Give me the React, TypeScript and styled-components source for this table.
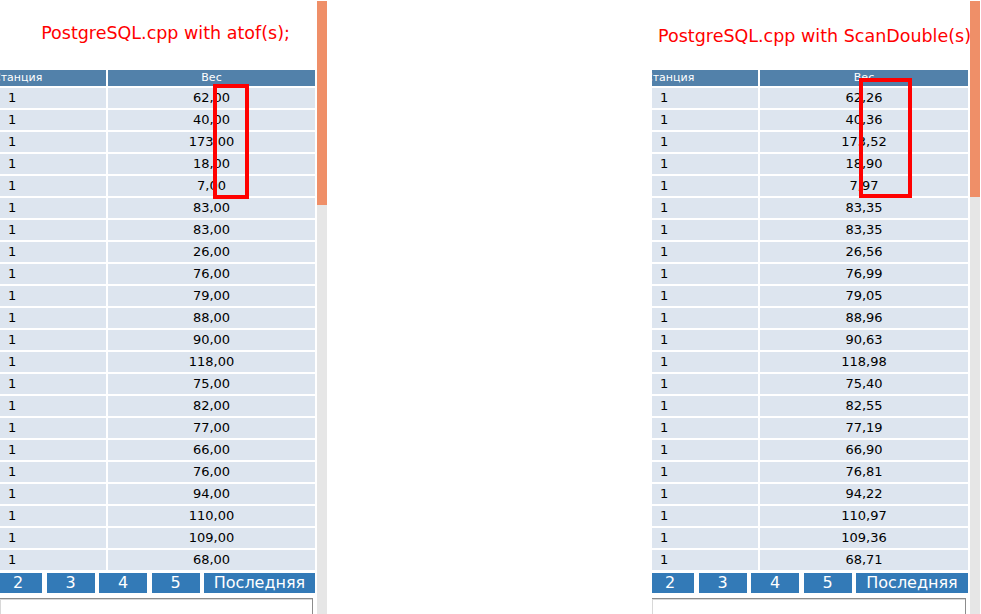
import React from "react";
import styled, { createGlobalStyle } from "styled-components";

const Global = createGlobalStyle`
  html, body { margin: 0; padding: 0; background: #fff; }
  body { font-family: "DejaVu Sans", Verdana, sans-serif; overflow: hidden; }
`;

const Page = styled.div`
  width: 981px;
  height: 614px;
  display: flex;
  justify-content: space-between;
  overflow: hidden;
`;

const Panel = styled.div<{ $w: number }>`
  position: relative;
  width: ${(p) => p.$w}px;
  height: 614px;
  display: grid;
  grid-template-columns: ${(p) => p.$w - 13}px 10px;
  column-gap: 2px;
  align-items: start;
`;

const Content = styled.div`
  display: flex;
  flex-direction: column;
  overflow: visible;
  min-width: 0;
`;

const Title = styled.div<{ $top: number }>`
  width: 331px;
  height: 70px;
  box-sizing: border-box;
  padding-top: ${(p) => p.$top}px;
  text-align: center;
  white-space: nowrap;
  color: #ff0000;
  font-size: 17.5px;
  line-height: 20px;
`;

const TableClip = styled.div`
  overflow: hidden;
`;

const Grid = styled.div`
  display: grid;
  grid-template-columns: 116px 1fr;
  column-gap: 2px;
  row-gap: 2px;
  margin-left: -10px;
`;

const Head = styled.div<{ $align: "left" | "center" }>`
  height: 16px;
  background: #5281aa;
  color: #fff;
  font-size: 11px;
  line-height: 16px;
  text-align: ${(p) => p.$align};
  text-indent: ${(p) => (p.$align === "left" ? "3px" : "0")};
  white-space: nowrap;
  overflow: hidden;
`;

const Cell = styled.div<{ $align: "left" | "center" }>`
  height: 20px;
  background: #dde5ef;
  color: #000;
  font-size: 13px;
  line-height: 20px;
  text-align: ${(p) => p.$align};
  padding-left: ${(p) => (p.$align === "left" ? "18px" : "0")};
  white-space: nowrap;
`;

const Pager = styled.div`
  display: flex;
  gap: 4.5px;
  margin: 3px 0 0 -6px;
  height: 20px;
`;

const PageBtn = styled.div<{ $wide?: boolean }>`
  flex: ${(p) => (p.$wide ? "1" : "0 0 48px")};
  background: #337ab7;
  color: #fff;
  font-size: 16px;
  line-height: 20px;
  text-align: center;
  white-space: nowrap;
`;

const Box = styled.div`
  margin-top: 5px;
  margin-right: 2px;
  height: 40px;
  border: 1px solid #8c8c8c;
  box-shadow: inset 1px 1px 0 #d8d8d8;
  border-left: none;
`;

const Scroll = styled.div<{ $thumb: number }>`
  position: relative;
  z-index: 2;
  grid-row: 1 / span 1;
  grid-column: 2;
  height: 614px;
  background: linear-gradient(
    to bottom,
    #fff 0px,
    #fff 1px,
    #ef8f68 1px,
    #ef8f68 ${(p) => p.$thumb}px,
    #e6e6e6 ${(p) => p.$thumb}px
  );
`;

const Mark = styled.div<{ $x: number; $y: number; $w: number; $h: number }>`
  position: absolute;
  left: ${(p) => p.$x}px;
  top: ${(p) => p.$y}px;
  width: ${(p) => p.$w}px;
  height: ${(p) => p.$h}px;
  box-sizing: border-box;
  border: 4px solid #ff0000;
  z-index: 3;
`;

const left = [
  "62,00", "40,00", "173,00", "18,00", "7,00", "83,00", "83,00", "26,00", "76,00", "79,00", "88,00",
  "90,00", "118,00", "75,00", "82,00", "77,00", "66,00", "76,00", "94,00", "110,00", "109,00", "68,00",
];
const right = [
  "62,26", "40,36", "173,52", "18,90", "7,97", "83,35", "83,35", "26,56", "76,99", "79,05", "88,96",
  "90,63", "118,98", "75,40", "82,55", "77,19", "66,90", "76,81", "94,22", "110,97", "109,36", "68,71",
];

type Props = {
  width: number;
  title: string;
  titleTop: number;
  values: string[];
  thumb: number;
  mark: { x: number; y: number; w: number; h: number };
};

function ResultPanel({ width, title, titleTop, values, thumb, mark }: Props) {
  return (
    <Panel $w={width}>
      <Content>
        <Title $top={titleTop}>{title}</Title>
        <TableClip>
          <Grid>
            <Head $align="left">Станция</Head>
            <Head $align="center">Вес</Head>
            {values.map((v, i) => (
              <React.Fragment key={i}>
                <Cell $align="left">1</Cell>
                <Cell $align="center">{v}</Cell>
              </React.Fragment>
            ))}
          </Grid>
          <Pager>
            <PageBtn>2</PageBtn>
            <PageBtn>3</PageBtn>
            <PageBtn>4</PageBtn>
            <PageBtn>5</PageBtn>
            <PageBtn $wide>Последняя</PageBtn>
          </Pager>
          <Box />
        </TableClip>
      </Content>
      <Scroll $thumb={thumb} />
      <Mark $x={mark.x} $y={mark.y} $w={mark.w} $h={mark.h} />
    </Panel>
  );
}

export default function App() {
  return (
    <>
      <Global />
      <Page>
        <ResultPanel
          width={328}
          title="PostgreSQL.cpp with atof(s);"
          titleTop={23}
          values={left}
          thumb={205}
          mark={{ x: 213, y: 84, w: 36, h: 115 }}
        />
        <ResultPanel
          width={329}
          title="PostgreSQL.cpp with ScanDouble(s);"
          titleTop={26}
          values={right}
          thumb={197}
          mark={{ x: 207, y: 78, w: 53, h: 120 }}
        />
      </Page>
    </>
  );
}
